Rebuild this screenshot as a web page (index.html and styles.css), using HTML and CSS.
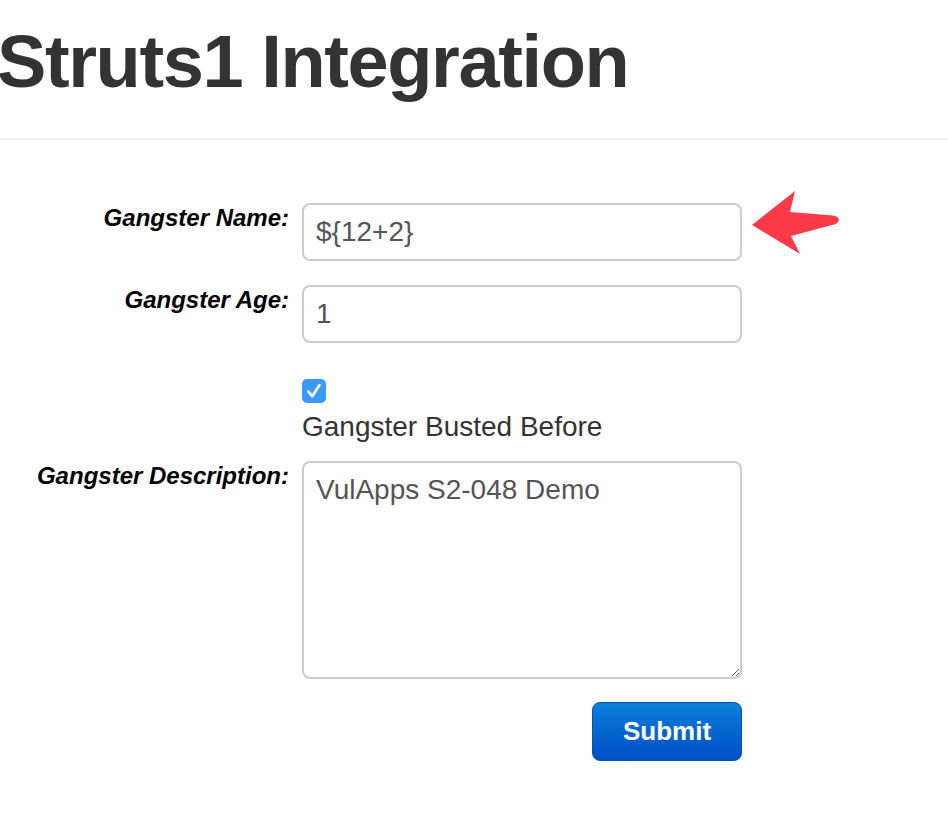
FILE: index.html
```html
<!DOCTYPE html>
<html lang="en">
<head>
<meta charset="utf-8">
<title>Struts1 Integration</title>
<link rel="stylesheet" href="styles.css">
</head>
<body>
<div class="page">
  <header class="page-header">
    <h1 class="title">Struts1 Integration</h1>
  </header>
  <form class="form">
    <div class="row row-name">
      <label class="label" for="name">Gangster Name:</label>
      <div class="field">
        <input class="input" id="name" type="text" value="${12+2}">
        <svg class="arrow" width="96" height="70" viewBox="748 188 96 70" aria-hidden="true">
          <path d="M752 225 L795 191 L790 212 L833 215.5 Q840 217 838.5 221 Q837 224.5 832 225 L791 236 L800 254 Z" fill="#fd3a48"/>
        </svg>
      </div>
    </div>
    <div class="row row-age">
      <label class="label" for="age">Gangster Age:</label>
      <div class="field">
        <input class="input" id="age" type="text" value="1">
      </div>
    </div>
    <div class="row row-check">
      <div></div>
      <div class="field check-field">
        <span class="checkbox" role="checkbox" aria-checked="true">
          <svg width="24" height="24" viewBox="0 0 24 24"><path d="M6.3 12.5 L10.3 17.3 L17.5 6" fill="none" stroke="#fff" stroke-width="2.6" stroke-linecap="round" stroke-linejoin="round"/></svg>
        </span>
        <span class="check-text">Gangster Busted Before</span>
      </div>
    </div>
    <div class="row row-desc">
      <label class="label" for="desc">Gangster Description:</label>
      <div class="field">
        <textarea class="textarea" id="desc">VulApps S2-048 Demo</textarea>
      </div>
    </div>
    <div class="row row-submit">
      <div></div>
      <div class="field submit-field">
        <button class="submit" type="button">Submit</button>
      </div>
    </div>
  </form>
</div>
</body>
</html>
```
FILE: styles.css
```css
* { box-sizing: border-box; }
html, body { margin: 0; padding: 0; background: #fff; }
body { font-family: "Liberation Sans", Arial, sans-serif; color: #333; overflow: hidden; }

.page { width: 948px; }

.page-header {
  padding-top: 21px;
  padding-bottom: 36px;
  border-bottom: 2px solid #eeeeee;
}
.title {
  margin: 0 0 0 -3px;
  font-size: 74px;
  line-height: 81px;
  font-weight: 700;
  letter-spacing: -1.4px;
  color: #333;
  white-space: nowrap;
}

.form { padding-top: 63px; }

.row {
  display: grid;
  grid-template-columns: 289px 440px;
  column-gap: 13px;
  align-items: start;
}
.row-age { margin-top: 24px; }
.row-check { margin-top: 36px; }
.row-desc { margin-top: 17px; }
.row-submit { margin-top: 23px; }

.label {
  text-align: right;
  font-size: 24px;
  line-height: 28px;
  padding-top: 1px;
  font-weight: 700;
  font-style: italic;
  color: #000;
  white-space: nowrap;
}

.field { position: relative; }

.input {
  display: block;
  width: 440px;
  height: 58px;
  margin: 0;
  padding: 0 12px;
  border: 2px solid #cccccc;
  border-radius: 8px;
  font-family: "Liberation Sans", Arial, sans-serif;
  font-size: 28px;
  color: #555;
  background: #fff;
  outline: none;
}

.arrow {
  position: absolute;
  left: 446px;
  top: -15px;
}

.check-field { display: flex; flex-direction: column; align-items: flex-start; }
.checkbox {
  display: block;
  width: 24px;
  height: 24px;
  border-radius: 5px;
  background: #3c99fc;
}
.checkbox svg { display: block; }
.check-text {
  margin-top: 7px;
  font-size: 28px;
  line-height: 34px;
  color: #333;
  white-space: nowrap;
}

.textarea {
  display: block;
  width: 440px;
  height: 218px;
  margin: 0;
  padding: 7px 12px;
  border: 2px solid #cccccc;
  border-radius: 8px;
  font-family: "Liberation Sans", Arial, sans-serif;
  font-size: 28px;
  line-height: 40px;
  color: #555;
  background: #fff;
  resize: vertical;
  outline: none;
}

.submit-field { display: flex; justify-content: flex-end; }
.submit {
  width: 150px;
  height: 59px;
  padding: 0;
  border: 1px solid #0252b6;
  border-radius: 8px;
  background: linear-gradient(to bottom, #0b82da 0%, #0566d0 50%, #0050c6 100%);
  color: #fff;
  font-family: "Liberation Sans", Arial, sans-serif;
  font-size: 26px;
  font-weight: 700;
  cursor: pointer;
}
```
